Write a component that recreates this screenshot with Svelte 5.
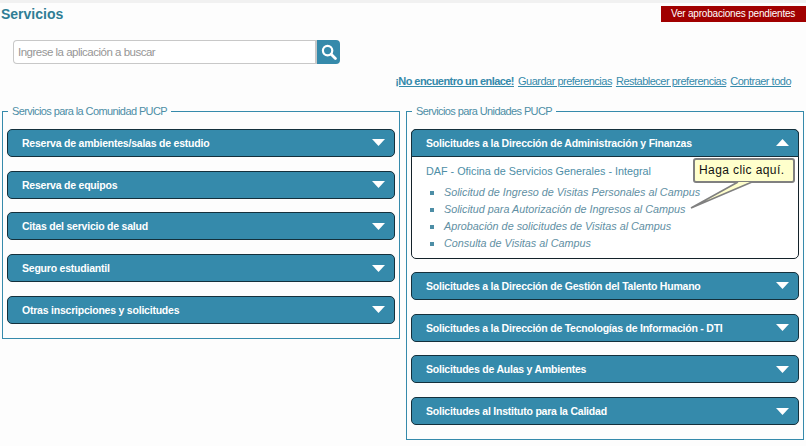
<script lang="ts">
	const comunidad = [
		'Reserva de ambientes/salas de estudio',
		'Reserva de equipos',
		'Citas del servicio de salud',
		'Seguro estudiantil',
		'Otras inscripciones y solicitudes'
	];
	const unidades = [
		'Solicitudes a la Dirección de Gestión del Talento Humano',
		'Solicitudes a la Dirección de Tecnologías de Información - DTI',
		'Solicitudes de Aulas y Ambientes',
		'Solicitudes al Instituto para la Calidad'
	];
	const enlaces = [
		'Solicitud de Ingreso de Visitas Personales al Campus',
		'Solicitud para Autorización de Ingresos al Campus',
		'Aprobación de solicitudes de Visitas al Campus',
		'Consulta de Visitas al Campus'
	];
</script>

{#snippet arrow(up = false)}
	<svg class="arrow" width="13" height="7" viewBox="0 0 13 7" aria-hidden="true">
		<path d={up ? 'M0 7 6.5 0 13 7Z' : 'M0 0H13L6.5 7Z'} fill="#fff" />
	</svg>
{/snippet}

<div class="page">
	<div class="strip"></div>
	<header class="top">
		<h1>Servicios</h1>
		<a class="pending" href="#top">Ver aprobaciones pendientes</a>
	</header>

	<div class="search">
		<input type="text" placeholder="Ingrese la aplicación a buscar" />
		<button type="button" aria-label="Buscar">
			<svg width="16" height="16" viewBox="0 0 16 16" aria-hidden="true">
				<circle cx="6.6" cy="6.6" r="4.7" fill="none" stroke="#fff" stroke-width="2.2" />
				<path d="M10.2 10.2 14.4 14.4" stroke="#fff" stroke-width="2.8" stroke-linecap="round" />
			</svg>
		</button>
	</div>

	<nav class="links">
		<a class="strong" href="#top">¡No encuentro un enlace! </a>
		<a href="#top">Guardar preferencias </a>
		<a href="#top">Restablecer preferencias </a>
		<a href="#top">Contraer todo</a>
	</nav>

	<div class="columns">
		<fieldset class="group left">
			<legend>Servicios para la Comunidad PUCP</legend>
			{#each comunidad as item}
				<div class="head">
					<span>{item}</span>
					{@render arrow()}
				</div>
			{/each}
		</fieldset>

		<fieldset class="group right">
			<legend>Servicios para Unidades PUCP</legend>
			<div class="panel">
				<div class="head open">
					<span>Solicitudes a la Dirección de Administración y Finanzas</span>
					{@render arrow(true)}
				</div>
				<div class="body">
					<h2>DAF - Oficina de Servicios Generales - Integral</h2>
					<ul>
						{#each enlaces as enlace}
							<li><a href="#top">{enlace}</a></li>
						{/each}
					</ul>
					<div class="tip">Haga clic aquí.</div>
					<svg class="tail" width="66" height="40" viewBox="0 0 66 40" aria-hidden="true">
						<path d="M1 37 48 11 62 11Z" fill="#ffffcc" />
						<path d="M48 11 1 37 62 11" fill="none" stroke="#808080" stroke-width="1.6" />
					</svg>
				</div>
			</div>
			{#each unidades as item}
				<div class="head">
					<span>{item}</span>
					{@render arrow()}
				</div>
			{/each}
		</fieldset>
	</div>
</div>

<style>
	:global(body) {
		margin: 0;
		background: #fdfdfd;
	}
	.page {
		width: 806px;
		height: 446px;
		overflow: hidden;
		font-family: 'Liberation Sans', Arial, sans-serif;
		font-size: 12px;
		color: #3a8aaa;
	}
	.strip {
		height: 3px;
		background: #f1f1f1;
	}
	.top {
		display: flex;
		justify-content: space-between;
		align-items: flex-start;
		height: 37px;
	}
	h1 {
		margin: 2px 0 0 1px;
		font-size: 14px;
		line-height: 18px;
		font-weight: 700;
		color: #2f7d95;
	}
	.pending {
		margin-top: 3px;
		width: 145px;
		height: 16px;
		line-height: 16px;
		padding-left: 10px;
		box-sizing: border-box;
		background: #a10000;
		color: #fff;
		font-size: 10px;
		letter-spacing: -0.2px;
		white-space: nowrap;
		text-decoration: none;
	}
	.search {
		display: flex;
		margin-left: 13px;
		width: 327px;
		height: 24px;
	}
	.search input {
		flex: 1;
		min-width: 0;
		box-sizing: border-box;
		padding: 0 4px;
		border: 1px solid #c8c8c8;
		border-right-width: 2px;
		border-radius: 4px 0 0 4px;
		background: #fff;
		font: 11.5px 'Liberation Sans', Arial, sans-serif;
		letter-spacing: -0.5px;
	}
	.search input::placeholder {
		color: #969696;
		opacity: 1;
	}
	.search button {
		width: 23px;
		padding: 0;
		border: 0;
		border-radius: 0 4px 4px 0;
		background: #358aab;
		display: flex;
		align-items: center;
		justify-content: center;
	}
	.links {
		display: flex;
		justify-content: flex-end;
		gap: 4px;
		margin-top: 10px;
		padding-right: 15px;
		font-size: 11px;
		letter-spacing: -0.5px;
		line-height: 14px;
		height: 14px;
	}
	.links a {
		color: #358aab;
		white-space: pre;
	}
	.links a.strong {
		font-weight: 700;
		letter-spacing: -0.55px;
	}
	.columns {
		display: flex;
		align-items: flex-start;
		gap: 6px;
		margin: 16px 0 0 2px;
	}
	.group {
		box-sizing: border-box;
		min-width: 0;
		margin: 0;
		padding: 10.8px 4px 0;
		border: 1px solid #358aab;
		width: 398px;
	}
	.left {
		height: 235px;
	}
	.right {
		height: 336px;
	}
	legend {
		margin-left: 1px;
		padding: 0 4px;
		font-size: 11px;
		letter-spacing: -0.6px;
		line-height: 14px;
		color: #4d8ea6;
	}
	.head {
		box-sizing: border-box;
		display: flex;
		align-items: center;
		justify-content: space-between;
		height: 28px;
		margin-bottom: 13.75px;
		padding: 0 9px 0 14px;
		border: 1px solid #14303c;
		border-radius: 5px;
		background: #358aab;
		color: #fff;
		font-size: 10.5px;
		letter-spacing: -0.22px;
		font-weight: 700;
		line-height: 14px;
	}
	.panel {
		margin-bottom: 13.2px;
		border: 1px solid #14222a;
		border-radius: 5px;
		background: #fff;
	}
	.head.open {
		margin: -1px -1px 0;
		border-radius: 5px 5px 0 0;
	}
	.body {
		position: relative;
		height: 101px;
		padding: 7px 14px 0;
		box-sizing: border-box;
	}
	h2 {
		margin: 0 0 6px;
		font-size: 10.8px;
		font-weight: 400;
		line-height: 14px;
		color: #4d8ea6;
	}
	ul {
		margin: 0;
		padding: 0 0 0 18px;
		list-style: none;
	}
	li {
		position: relative;
		height: 17px;
		line-height: 17px;
		font-size: 10.8px;
		font-style: italic;
	}
	li::before {
		content: '';
		position: absolute;
		left: -14px;
		top: 7px;
		width: 4px;
		height: 4px;
		background: #4d8ea6;
	}
	li a {
		color: #5f8fa3;
		text-decoration: none;
	}
	.tip {
		position: absolute;
		left: 281px;
		top: 1px;
		width: 102px;
		height: 25px;
		box-sizing: border-box;
		border: 2px solid #808080;
		border-radius: 3px;
		background: #ffffcc;
		color: #111;
		font-size: 12px;
		letter-spacing: 0.4px;
		line-height: 21px;
		padding-left: 4px;
	}
	.tail {
		position: absolute;
		left: 278px;
		top: 14px;
	}
</style>
